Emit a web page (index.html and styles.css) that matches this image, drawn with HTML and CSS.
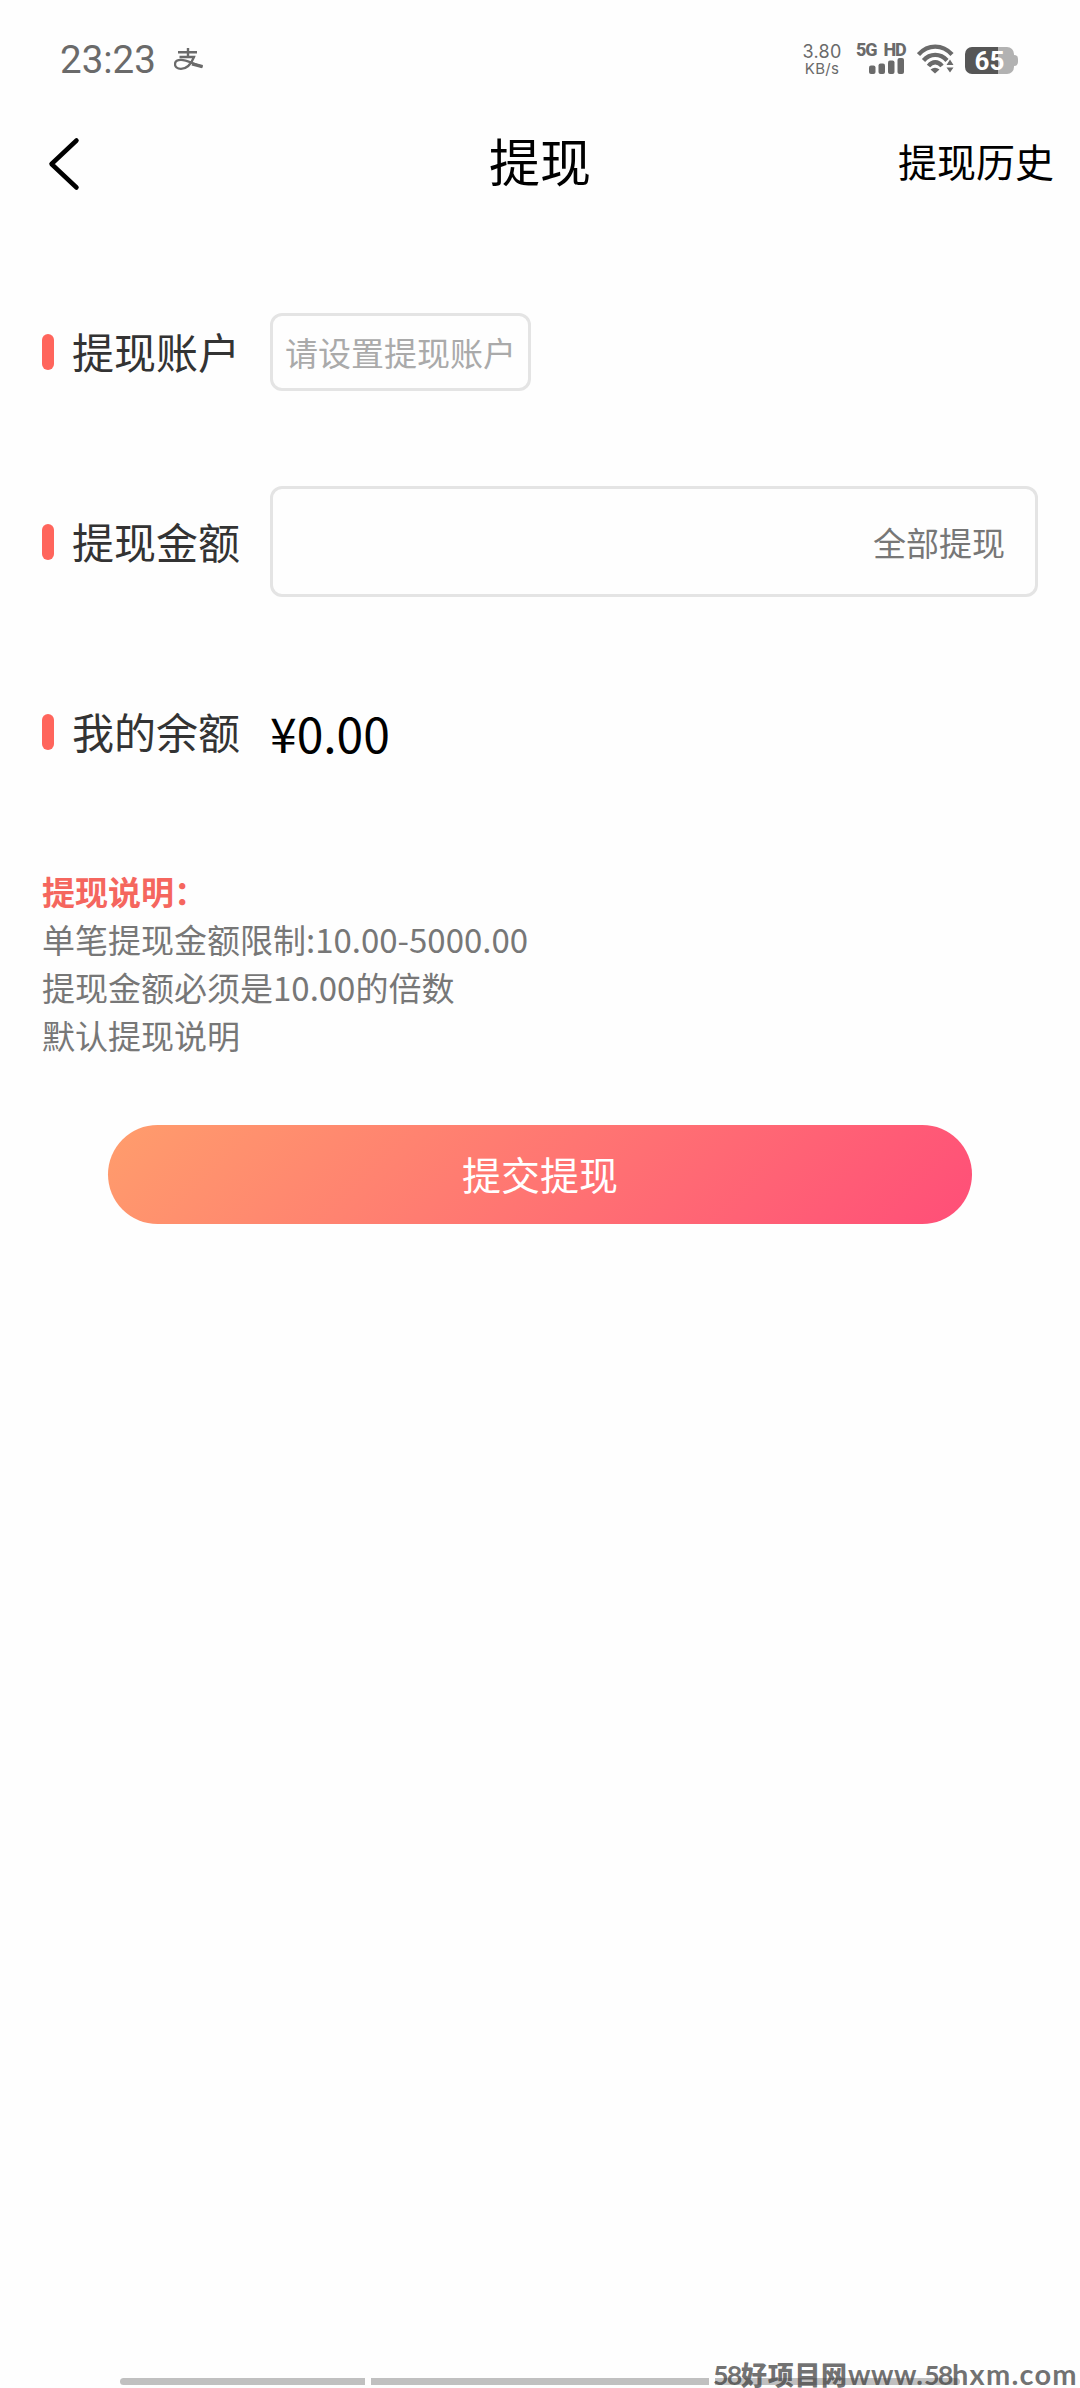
FILE: index.html
```html
<!DOCTYPE html>
<html lang="zh-CN">
<head>
<meta charset="utf-8">
<title>提现</title>
<link rel="stylesheet" href="styles.css">
</head>
<body>
<div class="screen">
  <div class="status">
    <span class="clock">23:23</span>
    <svg class="pay" width="29" height="22" viewBox="0 0 29 22" fill="none" stroke="#6a6a6a">
      <path d="M4 4.3H23M14 0V9" stroke-width="2.4"/>
      <path d="M5.5 9H20C18 14 14.500 20.800 7 20.800C3 20.800 1 18.600 1 16.200C1 13 4 11.800 7 11.800C13 11.800 18 15.500 28.500 18.800" stroke-width="2.300"/>
      <path d="M18 15.800L28.500 18.700" stroke-width="3.400"/>
    </svg>
    <div class="speed"><span class="rate">3.80</span><span class="unit">KB/s</span></div>
    <div class="network">
      <span class="net-label">5G HD</span>
      <svg width="36" height="16" viewBox="0 0 36 16" fill="#6a6a6a">
        <rect x="0" y="7.500" width="6.500" height="8.500" rx="2"/><rect x="9.500" y="5.500" width="6.500" height="10.500" rx="2"/><rect x="19" y="2.500" width="6.500" height="13.500" rx="2"/><rect x="28.500" y="0" width="6.500" height="16" rx="2"/>
      </svg>
    </div>
    <svg class="wifi" width="37" height="30" viewBox="0 0 37 30">
      <g fill="none" stroke="#6a6a6a" stroke-width="4.300">
        <path d="M1.500 10.500C11 0 25.500 0 35 10.500"/>
        <path d="M6.500 16.500C13 9 23.500 9 30 16.500"/>
        <path d="M11.500 22C15.500 17 21 17 25 22"/>
      </g>
      <path d="M13.500 25.500Q18 22 22.500 25.500L18 29.500Z" fill="#6a6a6a"/>
      <path d="M33 13L38 21.500H28.500Z" fill="#fefefe"/>
      <path d="M33 15.500L36.500 21H29.500ZM29.500 23.500H36.500L33 28.500Z" fill="#6a6a6a"/>
    </svg>
    <div class="battery"><span class="level">65</span></div>
  </div>

  <header class="nav">
    <svg class="back" width="32" height="54" viewBox="0 0 32 54" fill="none" stroke="#000" stroke-width="4.500" stroke-linecap="round" stroke-linejoin="round"><path d="M28.500 3.500L3.500 27L28.500 50.500"/></svg>
    <h1 class="title">提现</h1>
    <span class="history">提现历史</span>
  </header>

  <main class="form">
    <div class="row"><i class="mark"></i><span class="label">提现账户</span><div class="account">请设置提现账户</div></div>
    <div class="row"><i class="mark"></i><span class="label">提现金额</span><div class="amount">全部提现</div></div>
    <div class="row"><i class="mark"></i><span class="label">我的余额</span><span class="balance">¥0.00</span></div>
  </main>

  <section class="notes">
    <h2 class="notes-title">提现说明：</h2>
    <p>单笔提现金额限制:10.00-5000.00</p>
    <p>提现金额必须是10.00的倍数</p>
    <p>默认提现说明</p>
  </section>

  <div class="submit">提交提现</div>

  <footer class="bottom">
    <div class="gesture"><i class="side"></i><i class="mid"></i><i class="side"></i></div>
    <div class="watermark"><span class="num">58</span><span class="site">好项目网</span><span class="www">www.</span><span class="num">58</span><span class="domain">hxm.com</span></div>
  </footer>
</div>
</body>
</html>
```
FILE: styles.css
```css
* { box-sizing: border-box; }
body {
  margin: 0;
  background: #fefefe;
  font-family: "Noto Sans CJK SC", sans-serif;
  color: #000;
}
h1, h2, p { margin: 0; }
svg { display: block; flex: none; }
.screen {
  position: relative;
  display: flex;
  flex-direction: column;
  width: 1080px;
  height: 2388px;
}

.status {
  display: flex;
  align-items: center;
  height: 120px;
  padding: 0 60px 2px 60px;
  color: #6a6a6a;
  font-family: Roboto, sans-serif;
}
.clock { width: 114px; padding-top: 2px; font-size: 38.500px; line-height: 44px; }
.pay { margin-right: 601px; }
.speed {
  display: flex;
  flex-direction: column;
  align-items: center;
  width: 36px;
  padding-top: 1px;
  font-family: Inter, sans-serif;
}
.rate { font-size: 18px; line-height: 18px; letter-spacing: 0.300px; }
.unit { font-size: 15px; line-height: 16px; letter-spacing: 0.300px; }
.network {
  display: flex;
  flex-direction: column;
  align-items: flex-end;
  width: 49px;
  margin: -3px 0 0 16px;
}
.net-label { width: 49px; font-size: 18px; font-weight: 800; line-height: 17px; letter-spacing: -1.200px; word-spacing: 4px; white-space: nowrap; }
.wifi { margin-left: 12px; }
.battery {
  position: relative;
  width: 49px;
  height: 27px;
  margin: 3px 0 0 11px;
  border-radius: 7px;
  background: linear-gradient(90deg, #565656 33px, #b2b2b2 33px);
  color: #fff;
  text-align: center;
}
.battery::after {
  content: "";
  position: absolute;
  left: 49px;
  top: 8px;
  width: 4px;
  height: 11px;
  border-radius: 0 4px 4px 0;
  background: #b2b2b2;
}
.level { display: block; font-size: 26px; font-weight: 700; line-height: 28px; }

.nav {
  display: grid;
  grid-template-columns: 1fr auto 1fr;
  align-items: center;
  height: 86px;
  padding: 0 26px 0 48px;
}
.back { margin-bottom: 1px; }
.title { padding: 0 22px 8px 0; font-size: 51px; font-weight: 400; line-height: 80px; }
.history { justify-self: end; padding-bottom: 8px; font-size: 39px; line-height: 60px; }

.form { padding: 51px 42px 0; }
.row { display: flex; align-items: center; height: 190px; }
.mark { width: 12px; height: 36px; border-radius: 6px; background: #ff655c; }
.label { width: 198px; padding-bottom: 2px; margin-left: 18px; color: #333; font-size: 42px; line-height: 60px; }
.account, .amount {
  display: flex;
  align-items: center;
  border: 3px solid #e4e4e4;
  border-radius: 12px;
  font-size: 33px;
  line-height: 48px;
}
.account { width: 261px; height: 78px; padding-left: 12px; color: #aaa; white-space: nowrap; }
.amount { justify-content: flex-end; width: 768px; height: 111px; margin-top: -1px; padding-right: 30px; color: #777; }
.balance { font-size: 48px; line-height: 60px; }

.notes { padding: 40px 42px 0; color: #777; font-size: 33px; line-height: 48px; }
.notes-title { color: #f5665e; font-size: 33px; font-weight: 700; line-height: 48px; }

.submit {
  align-self: center;
  width: 864px;
  height: 99px;
  margin-top: 66px;
  border-radius: 50px;
  background: linear-gradient(135deg, #ff9d6c, #ff4e78);
  color: #fff;
  font-size: 39px;
  line-height: 97px;
  text-align: center;
}

.bottom { margin-top: auto; padding: 0 120px 3px; }
.gesture { display: flex; gap: 6px; height: 7px; }
.side { width: 245px; background: #c0c0c0; }
.side:first-child { border-radius: 4px 0 0 4px; }
.side:last-child { border-radius: 0 4px 4px 0; }
.mid { flex: 1; background: #c0c0c0; }
.watermark {
  position: absolute;
  right: 0;
  bottom: 0;
  display: flex;
  align-items: baseline;
  width: 367px;
  height: 28px;
  color: rgba(60, 60, 60, 0.72);
  font-family: Lato, sans-serif;
  font-size: 28px;
  font-weight: 700;
  line-height: 28px;
  white-space: nowrap;
}
.num { width: 28px; font-size: 27px; letter-spacing: -1.800px; }
.site { width: 107px; font-family: "Noto Sans CJK SC", sans-serif; font-weight: 900; font-size: 26px; letter-spacing: 0.700px; }
.www { width: 76px; letter-spacing: 0.500px; }
.domain { font-size: 29px; letter-spacing: 1.200px; }
```
